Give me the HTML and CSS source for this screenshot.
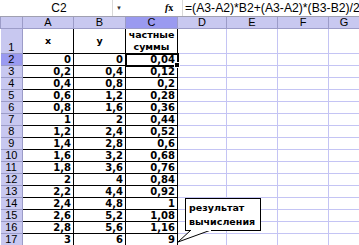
FILE: index.html
```html
<!DOCTYPE html>
<html lang="ru">
<head>
    <meta charset="UTF-8">
    <title>Частные суммы</title>
    <link rel="stylesheet" href="styles.css">
</head>
<body>

<div class="formula-bar">
    <div class="name-box">C2</div>
    <div class="name-drop">&#9660;</div>
    <div class="fx"><i>f</i>x</div>
    <div class="formula">=(A3-A2)*B2+(A3-A2)*(B3-B2)/2</div>
</div>

<div class="sheet">
    <table class="grid">
        <colgroup>
            <col class="c-rh"><col class="c-a"><col class="c-b"><col class="c-c">
            <col class="c-d"><col class="c-e"><col class="c-f"><col class="c-g">
        </colgroup>
        <thead>
            <tr>
                <th class="corner"></th>
                <th>A</th><th>B</th><th class="sel">C</th>
                <th>D</th><th>E</th><th>F</th><th>G</th>
            </tr>
        </thead>
        <tbody id="rows">
            <tr class="row-title">
                <th class="rh">1</th>
                <td class="t">x</td><td class="t">y</td><td class="t">частные суммы</td>
                <td class="e"></td><td class="e"></td><td class="e"></td><td class="e"></td>
            </tr>
        </tbody>
    </table>

    <div class="callout">
        <svg class="tail" width="40" height="16" viewBox="0 0 40 16">
            <polygon points="14,0 1,12 34,0" fill="#fff" stroke="#000" stroke-width="1"/>
            <line x1="14" y1="0" x2="34" y2="0" stroke="#fff" stroke-width="2"/>
        </svg>
        <div class="callout-text">результат<br>вычисления</div>
    </div>
</div>

<script>
    // значения x, y и частных сумм для строк 2..17
    const data = [
        ["0", "0", "0,04"], ["0,2", "0,4", "0,12"], ["0,4", "0,8", "0,2"],
        ["0,6", "1,2", "0,28"], ["0,8", "1,6", "0,36"], ["1", "2", "0,44"],
        ["1,2", "2,4", "0,52"], ["1,4", "2,8", "0,6"], ["1,6", "3,2", "0,68"],
        ["1,8", "3,6", "0,76"], ["2", "4", "0,84"], ["2,2", "4,4", "0,92"],
        ["2,4", "4,8", "1"], ["2,6", "5,2", "1,08"], ["2,8", "5,6", "1,16"],
        ["3", "6", "9"]
    ];
    const body = document.getElementById("rows");
    data.forEach((row, i) => {
        const n = i + 2;
        const tr = document.createElement("tr");
        let html = '<th class="rh' + (n === 2 ? ' sel' : '') + '">' + n + '</th>';
        row.forEach((v, j) => {
            html += '<td class="v' + (n === 2 && j === 2 ? ' active' : '') + '">' + v + '</td>';
        });
        html += '<td class="e"></td><td class="e"></td><td class="e"></td><td class="e"></td>';
        tr.innerHTML = html;
        body.appendChild(tr);
    });
</script>

</body>
</html>
```

FILE: styles.css
```css
body {
    margin: 0;
    font-family: 'Liberation Sans', Arial, sans-serif;
    background-color: #fff;
    color: #000;
    overflow: hidden;
}

.formula-bar {
    display: flex;
    align-items: center;
    height: 16px;
    border-bottom: 1px solid #a0a0b0;
    font-size: 12px;
    overflow: hidden;
}

.name-box {
    width: 113px;
    flex: none;
    text-align: center;
    padding-left: 6px;
    box-sizing: border-box;
    border-right: 1px solid #d8d8d8;
    height: 16px;
    line-height: 16px;
}

.name-drop {
    width: 45px;
    flex: none;
    padding-left: 3px;
    font-size: 6px;
    color: #333;
}

.fx {
    width: 22px;
    flex: none;
    font-size: 10px;
    font-weight: bold;
    font-family: 'Liberation Serif', serif;
    border-right: 1px solid #d8d8d8;
    height: 16px;
    line-height: 16px;
    box-sizing: border-box;
    padding-left: 4px;
}

.formula {
    padding-left: 2px;
    white-space: nowrap;
    font-size: 12.2px;
}

.sheet {
    position: relative;
    overflow: hidden;
}

.grid {
    border-collapse: collapse;
    table-layout: fixed;
    width: 359px;
    font-size: 10px;
}

.c-rh { width: 22px; }
.c-a { width: 51px; }
.c-b { width: 52px; }
.c-c { width: 52px; }
.c-d { width: 49px; }
.c-e { width: 51px; }
.c-f { width: 51px; }
.c-g { width: 31px; }

thead th {
    height: 11px;
    padding: 0;
    font-weight: normal;
    font-size: 11px;
    background-color: #c8c8f0;
    border: 1px solid #9c9cc8;
    border-top: none;
    line-height: 11px;
}

thead th.sel {
    background-color: #9a9af0;
}

.rh {
    height: 11px;
    padding: 0;
    font-weight: normal;
    font-size: 11px;
    background-color: #c8c8f0;
    border: 1px solid #9c9cc8;
    border-left: none;
    line-height: 11px;
    text-align: center;
}

.rh.sel {
    background-color: #9a9af0;
}

.row-title .rh {
    height: 23px;
    vertical-align: bottom;
}

td {
    padding: 0;
    height: 11px;
    line-height: 11px;
}

td.t {
    border: 1px solid #000;
    font-family: 'DejaVu Sans', Verdana, sans-serif;
    font-weight: bold;
    text-align: center;
    font-size: 9.5px;
    line-height: 12px;
}

td.v {
    border: 1px solid #000;
    font-family: 'DejaVu Sans', Verdana, sans-serif;
    font-weight: bold;
    font-size: 10px;
    text-align: right;
    padding-right: 2px;
}

td.active {
    outline: 2px solid #000;
    outline-offset: -1px;
    position: relative;
}

td.active::after {
    content: "";
    position: absolute;
    right: -3px;
    bottom: -3px;
    width: 4px;
    height: 4px;
    background-color: #000;
    border: 1px solid #fff;
}

td.e {
    border: 1px solid #c4c4f4;
}

.callout {
    position: absolute;
    left: 177px;
    top: 181px;
    width: 84px;
    height: 33px;
}

.callout-text {
    position: absolute;
    left: 8px;
    top: 0;
    width: 76px;
    height: 33px;
    box-sizing: border-box;
    border: 1px solid #000;
    background-color: #fff;
    font-family: 'DejaVu Sans', Verdana, sans-serif;
    font-size: 9.5px;
    font-weight: bold;
    line-height: 14px;
    padding: 2px 3px;
}

.tail {
    position: absolute;
    left: 0;
    top: 32px;
    z-index: 1;
}
```
